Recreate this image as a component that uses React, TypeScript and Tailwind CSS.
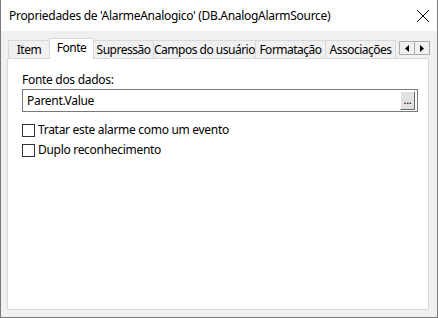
import React from 'react';

const tabs = [
  { label: 'Item', w: 'w-[42px]' },
  { label: 'Fonte', w: 'w-[45px]', active: true },
  { label: 'Supressão', w: 'w-[61px]' },
  { label: 'Campos do usuário', w: 'w-[103px]' },
  { label: 'Formatação', w: 'w-[71px]' },
  { label: 'Associações', w: 'w-[71px]' },
];

function Checkbox({ label }: { label: string }) {
  return (
    <label className="flex items-center h-[16px]">
      <span className="w-[13px] h-[13px] border border-[#333333] bg-white shrink-0" />
      <span className="ml-[3px] leading-[16px] whitespace-nowrap">{label}</span>
    </label>
  );
}

function ScrollButton({ dir }: { dir: 'left' | 'right' }) {
  return (
    <div className="w-[16px] h-[14px] border border-[#adadad] bg-[#f0f0f0] flex items-center justify-center">
      <svg width="4" height="7" viewBox="0 0 4 7">
        {dir === 'left' ? <path d="M4 0 L0 3.5 L4 7 Z" fill="#000" /> : <path d="M0 0 L4 3.5 L0 7 Z" fill="#000" />}
      </svg>
    </div>
  );
}

export default function App() {
  return (
    <div className="w-[438px] h-[318px] flex flex-col bg-[#f0f0f0] border-x border-b border-[#7a7a7a] font-['Noto_Sans',_sans-serif] text-[12px] tracking-[-0.3px] text-black">
      {/* Title bar */}
      <div className="h-[31px] bg-white flex items-center justify-between pl-[8px] pr-[6px] shrink-0">
        <span className="leading-[16px] whitespace-nowrap">Propriedades de 'AlarmeAnalogico' (DB.AnalogAlarmSource)</span>
        <svg width="14" height="14" viewBox="0 0 14 14" className="mr-[1px]">
          <path d="M1 1 L13 13 M13 1 L1 13" stroke="#000" strokeWidth="1" />
        </svg>
      </div>

      {/* Body */}
      <div className="flex-1 flex flex-col pl-[6px] pr-[8px] pt-[7px] pb-[7px]">
        {/* Tabs */}
        <div className="h-[20px] flex items-end relative z-10 tracking-[-0.5px]">
          <div className="flex items-end pl-[1px]">
            {tabs.map((t) =>
              t.active ? (
                <div
                  key={t.label}
                  className={`${t.w} h-[21px] -mb-[1px] -ml-[1px] bg-white border-x border-t border-[#d9d9d9] flex items-start justify-center pt-[1px] relative z-10`}
                >
                  <span className="leading-[16px] whitespace-nowrap">{t.label}</span>
                </div>
              ) : (
                <div
                  key={t.label}
                  className={`${t.w} h-[18px] bg-[#f0f0f0] border-x border-t border-[#d9d9d9] -ml-[1px] first:ml-0 flex items-center justify-center`}
                >
                  <span className="leading-[16px] whitespace-nowrap">{t.label}</span>
                </div>
              )
            )}
          </div>
          <div className="ml-auto mr-[-1px] mb-[3px] flex">
            <ScrollButton dir="left" />
            <div className="-ml-[1px]">
              <ScrollButton dir="right" />
            </div>
          </div>
        </div>

        {/* Panel */}
        <div className="flex-1 bg-white border border-[#d9d9d9] pl-[14px] pr-[10px] pt-[13px] flex flex-col">
          <div className="leading-[16px]">Fonte dos dados:</div>
          <div className="mt-[1px] h-[23px] border border-[#7a7a7a] flex items-center justify-between pl-[4px] pr-[2px]">
            <span className="leading-[16px]">Parent.Value</span>
            <div className="w-[15px] h-[19px] bg-[#e1e1e1] border-t border-l border-white border-b border-r border-b-[#696969] border-r-[#696969] flex items-center justify-center">
              <span className="text-[11px] leading-[10px] -mt-[2px]">...</span>
            </div>
          </div>
          <div className="mt-[10px] flex flex-col gap-[4px]">
            <Checkbox label="Tratar este alarme como um evento" />
            <Checkbox label="Duplo reconhecimento" />
          </div>
        </div>
      </div>
    </div>
  );
}
